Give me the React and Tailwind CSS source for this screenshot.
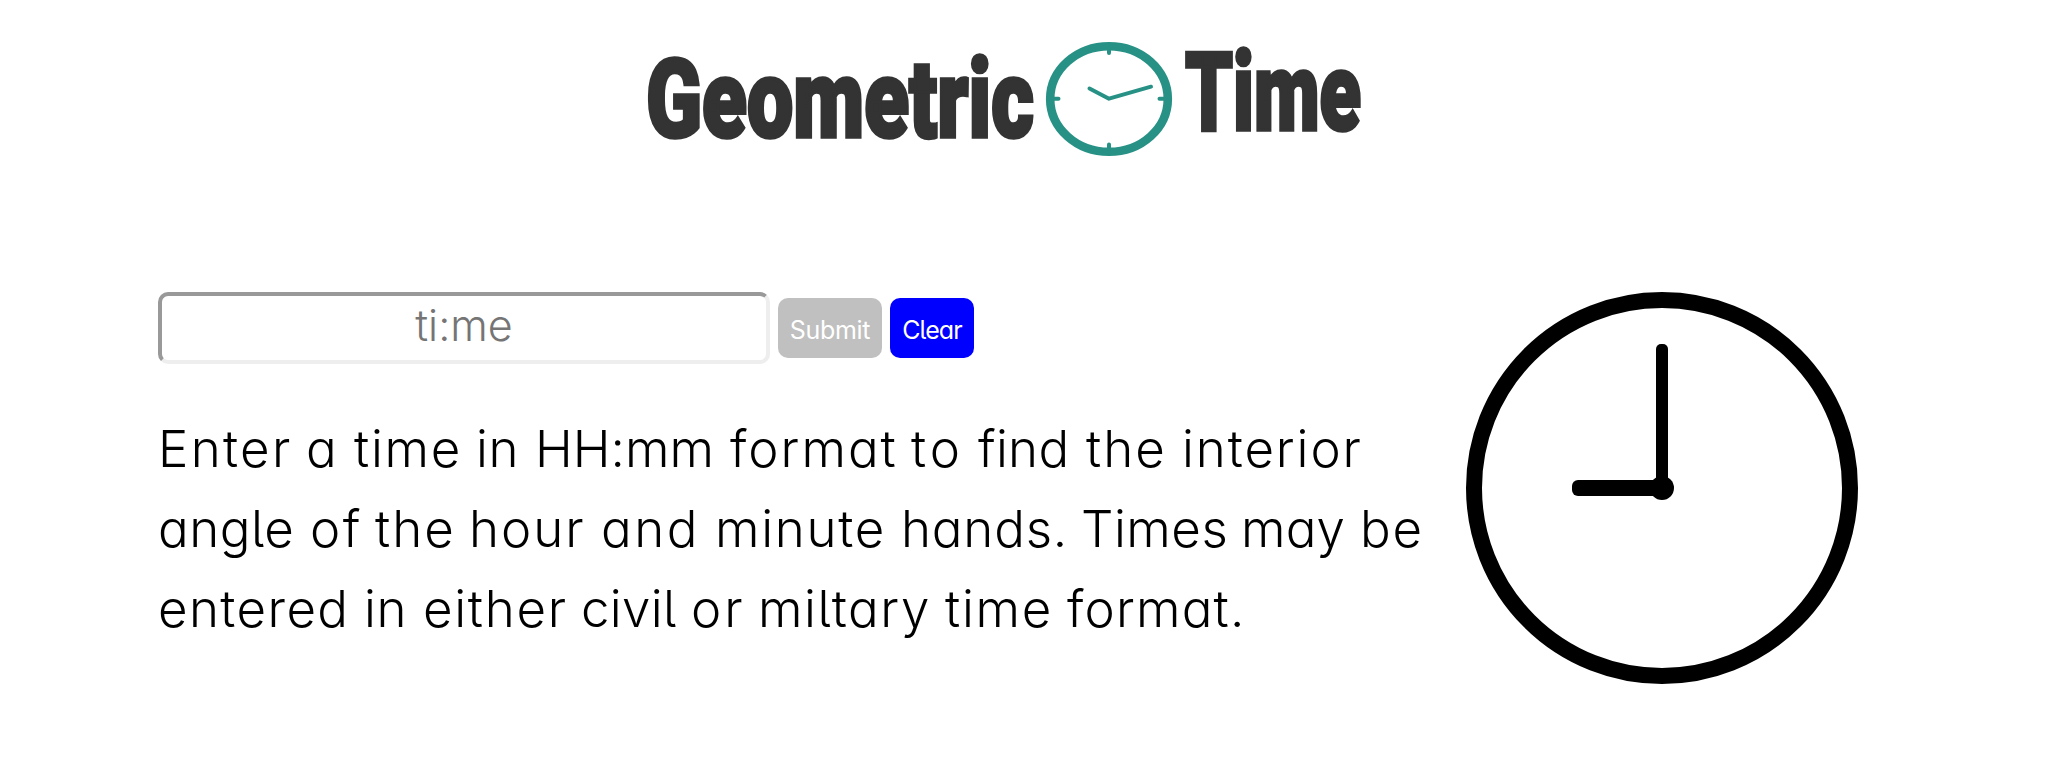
const lines = [
  [
    ['Enter', 'w-[148px] tracking-[2.3px]'],
    ['a', 'w-[48px]'],
    ['time', 'w-[122px] tracking-[1.7px]'],
    ['in', 'w-[59px] tracking-[0.5px]'],
    ['HH:mm', 'w-[195px] tracking-[0px]'],
    ['format', 'w-[181px] tracking-[2px]'],
    ['to', 'w-[67px] tracking-[4px]'],
    ['find', 'w-[108px] tracking-[0.3px]'],
    ['the', 'w-[96px] tracking-[2px]'],
    ['interior', 'w-[180px] tracking-[1.9px]'],
  ],
  [
    ['angle', 'w-[152px] tracking-[0.5px]'],
    ['of', 'w-[65px] tracking-[2.5px]'],
    ['the', 'w-[94px] tracking-[2px]'],
    ['hour', 'w-[132px] tracking-[2px]'],
    ['and', 'w-[114px] tracking-[2.5px]'],
    ['minute', 'w-[186px] tracking-[1.7px]'],
    ['hands.', 'w-[180px] tracking-[0.8px]'],
    ['Times', 'w-[160px] tracking-[0.5px]'],
    ['may', 'w-[119px] tracking-[0.2px]'],
    ['be', 'w-[70px] tracking-[1.8px]'],
  ],
  [
    ['entered', 'w-[206px] tracking-[1.4px]'],
    ['in', 'w-[59px] tracking-[0.5px]'],
    ['either', 'w-[158px] tracking-[1.7px]'],
    ['civil', 'w-[110px] tracking-[0.3px]'],
    ['or', 'w-[67px] tracking-[3px]'],
    ['miltary', 'w-[187px] tracking-[1.6px]'],
    ['time', 'w-[122px] tracking-[1.7px]'],
    ['format.', 'w-[180px] tracking-[1.2px]'],
  ],
];

function Logo() {
  return (
    <svg className="h-[140px] w-[740px]" viewBox="640 30 740 140" role="img" aria-label="Geometric Time">
      <g fill="#333" stroke="#333" strokeWidth="3.6" fontFamily="Roboto, sans-serif" fontWeight="900" fontSize="110">
        <text x="646" y="137" textLength="388" lengthAdjust="spacingAndGlyphs">Geometric</text>
        <text x="1185" y="130" textLength="176" lengthAdjust="spacingAndGlyphs">Time</text>
      </g>
      <g fill="none" stroke="#289186" strokeLinecap="round" strokeLinejoin="round">
        <ellipse cx="1109" cy="99" rx="58.8" ry="52.8" strokeWidth="8.6" />
        <path strokeWidth="4" d="M1109 48v5M1109 144.500v5M1053 98.700h5.500M1159.500 98.700h5.500M1089.500 88.500l19.500 10.200l42-12" />
      </g>
    </svg>
  );
}

function Clock() {
  return (
    <svg className="h-[392px] w-[392px] shrink-0" viewBox="0 0 392 392">
      <circle cx="196" cy="196" r="188" fill="none" stroke="#000" strokeWidth="16" />
      <rect x="190" y="52" width="12" height="144" rx="5" />
      <rect x="106" y="188" width="90" height="16" rx="6" />
      <circle cx="196" cy="196" r="12" />
    </svg>
  );
}

export default function App() {
  return (
    <div className="flex h-[776px] w-[2064px] flex-col overflow-hidden bg-white font-['Inter',sans-serif] text-black [font-feature-settings:'cv11','cv05','ss03']">
      <header className="pt-[30px] pl-[640px]">
        <Logo />
      </header>
      <main className="flex pt-[122px] pl-[158px]">
        <section className="w-[1308px]">
          <form className="flex h-[72px] items-center gap-2">
            <input
              className="h-[72px] w-[612px] rounded-[10px] border-4 border-t-[#999] border-r-[#eee] border-b-[#eee] border-l-[#999] pb-[6px] text-center text-[43px] font-[350] placeholder:text-[#757575]"
              placeholder="ti:me"
            />
            <button type="button" className="h-[60px] w-[104px] rounded-[10px] bg-[#c0c0c0] pt-[5px] text-[25px] tracking-[-0.3px] text-white">Submit</button>
            <button type="button" className="h-[60px] w-[84px] rounded-[10px] bg-[#00f] pt-[5px] text-[25px] tracking-[-0.9px] text-white">Clear</button>
          </form>
          <p className="pt-[45px] text-[51px] leading-[80px] font-[350] whitespace-nowrap">
            {lines.map((words, i) => (
              <span key={i} className="flex">
                {words.map(([word, style]) => (
                  <span key={word} className={style}>{word} </span>
                ))}
              </span>
            ))}
          </p>
        </section>
        <Clock />
      </main>
    </div>
  );
}
